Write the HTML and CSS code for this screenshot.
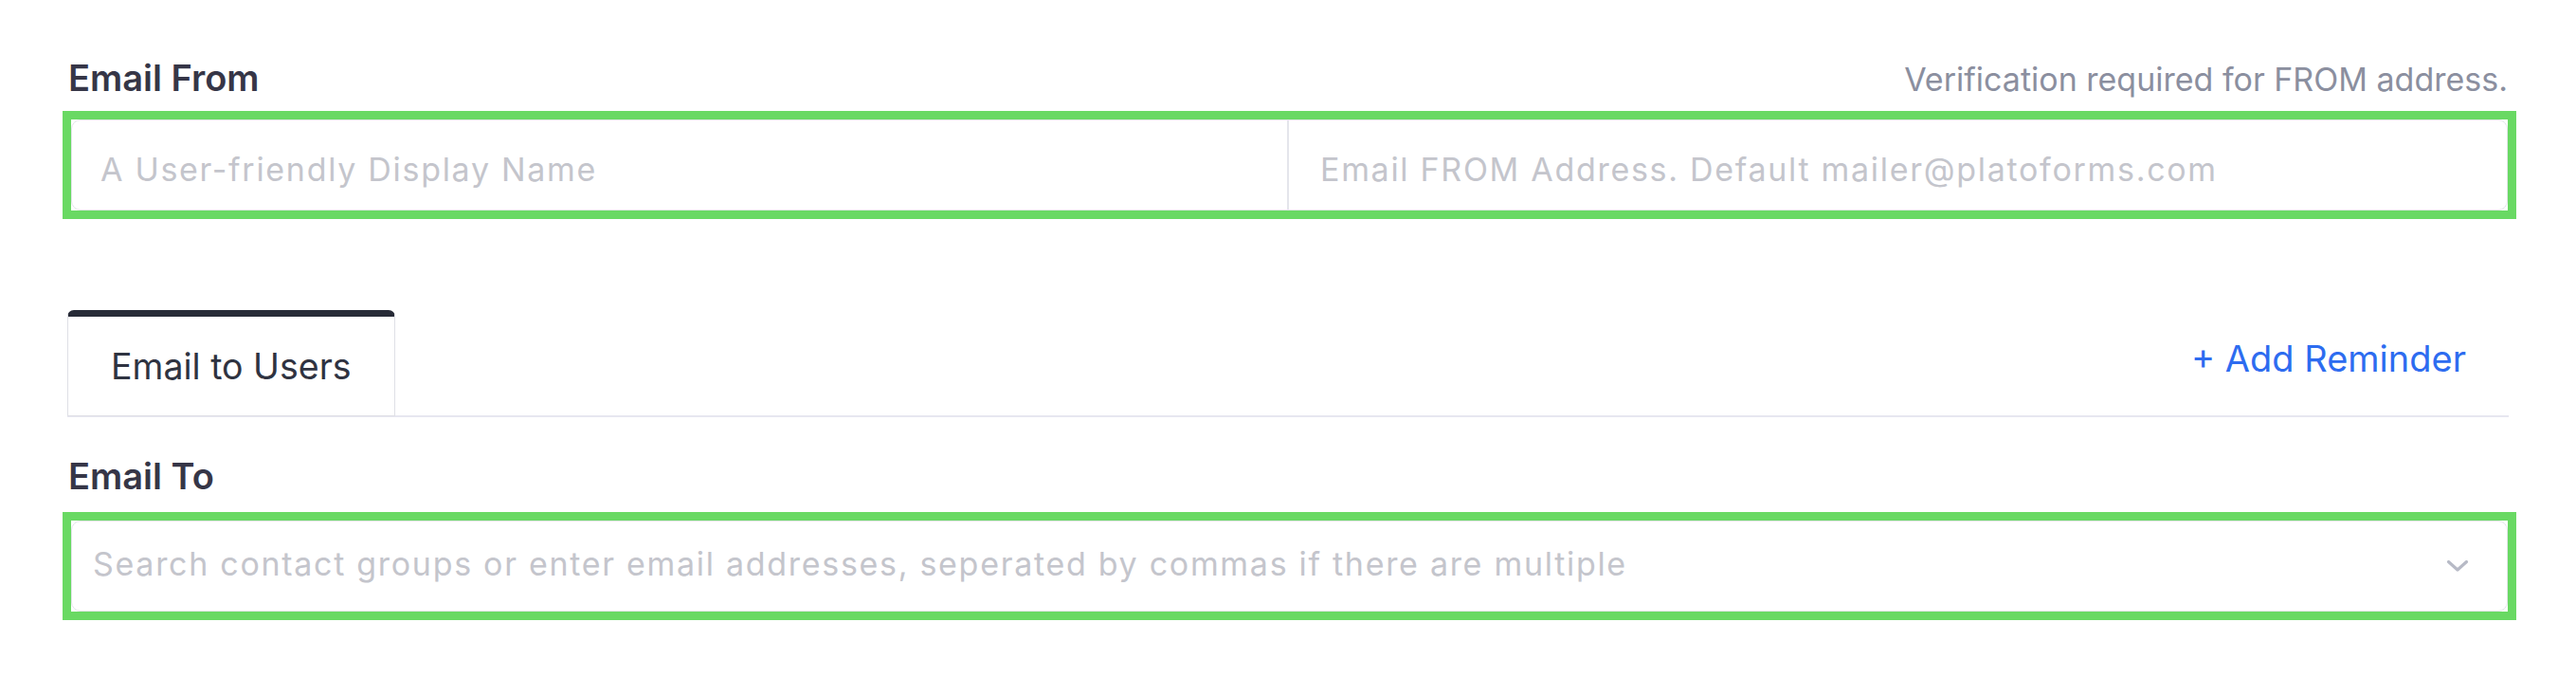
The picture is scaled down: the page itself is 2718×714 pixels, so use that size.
FILE: index.html
```html
<!DOCTYPE html>
<html lang="en">
<head>
    <meta charset="UTF-8">
    <meta name="viewport" content="width=device-width, initial-scale=1.0">
    <title>Email Settings</title>
    <link rel="stylesheet" href="styles.css">
</head>
<body>
    <div class="settings">
        <div class="field-head">
            <label class="field-label">Email From</label>
            <span class="field-note">Verification required for FROM address.</span>
        </div>
        <div class="highlight from-box">
            <div class="input-pair">
                <div class="fake-input"><span class="placeholder">A User-friendly Display Name</span></div>
                <div class="fake-input"><span class="placeholder">Email FROM Address. Default mailer@platoforms.com</span></div>
            </div>
        </div>

        <div class="tabs">
            <div class="tab active">Email to Users</div>
            <a href="#" class="add-reminder">+ Add Reminder</a>
        </div>

        <label class="field-label to-label">Email To</label>
        <div class="highlight to-box">
            <div class="select">
                <span class="placeholder">Search contact groups or enter email addresses, seperated by commas if there are multiple</span>
                <svg class="chevron" width="24" height="14" viewBox="0 0 24 14">
                    <path d="M2.5 2.5 L12 11 L21.5 2.5" fill="none" stroke="#b7bac6" stroke-width="3.2" stroke-linecap="round" stroke-linejoin="round"/>
                </svg>
            </div>
        </div>
    </div>
</body>
</html>
```

FILE: styles.css
```css
* {
    margin: 0;
    padding: 0;
    box-sizing: border-box;
    font-family: Inter, 'Noto Sans', sans-serif;
}

body {
    background: white;
    width: 2718px;
    height: 714px;
    overflow: hidden;
}

.settings {
    margin-left: 66px;
    width: 2589px;
    padding-top: 58px;
}

.field-head {
    display: flex;
    justify-content: space-between;
    align-items: baseline;
    padding: 0 9px 0 6px;
    height: 48px;
}

.field-label {
    display: block;
    font-size: 38px;
    line-height: 48px;
    font-weight: 600;
    color: #363647;
}

.field-note {
    font-size: 34px;
    line-height: 48px;
    color: #8b8f9f;
}

/* Green highlight frame */
.highlight {
    border: 9px solid #69d963;
    height: 114px;
}

.from-box {
    margin-top: 11px;
}

.input-pair {
    display: flex;
    height: 100%;
    border: 1px solid #e4e5eb;
    border-radius: 10px;
}

.fake-input {
    flex: 1;
    display: flex;
    align-items: center;
    padding: 8px 30px 0;
}

.fake-input + .fake-input {
    border-left: 2px solid #e4e5eb;
    padding-left: 33px;
}

.placeholder {
    font-size: 34px;
    letter-spacing: 1.7px;
    color: #c4c5cc;
    white-space: nowrap;
}

/* Tabs */
.tabs {
    display: flex;
    justify-content: space-between;
    align-items: center;
    margin: 96px 8px 0 5px;
    border-bottom: 2px solid #e7e7f0;
    padding-right: 45px;
}

.tab {
    border: 1px solid #dfe0e6;
    border-top: 7px solid #272b37;
    border-radius: 7px 7px 0 0;
    padding: 0 45px;
    height: 112px;
    display: flex;
    align-items: center;
    font-size: 37.5px;
    color: #2f3341;
    margin-bottom: -1px;
    background: white;
}

.add-reminder {
    color: #2d6cf0;
    font-size: 38px;
    text-decoration: none;
    padding-bottom: 9px;
}

.to-label {
    margin: 38px 0 0 6px;
}

.to-box {
    margin-top: 14px;
}

.select {
    display: flex;
    align-items: center;
    justify-content: space-between;
    height: 100%;
    border: 1px solid #e4e5eb;
    border-radius: 10px;
    padding: 0 40px 6px 22px;
}

.chevron {
    margin-top: 5px;
}
```
